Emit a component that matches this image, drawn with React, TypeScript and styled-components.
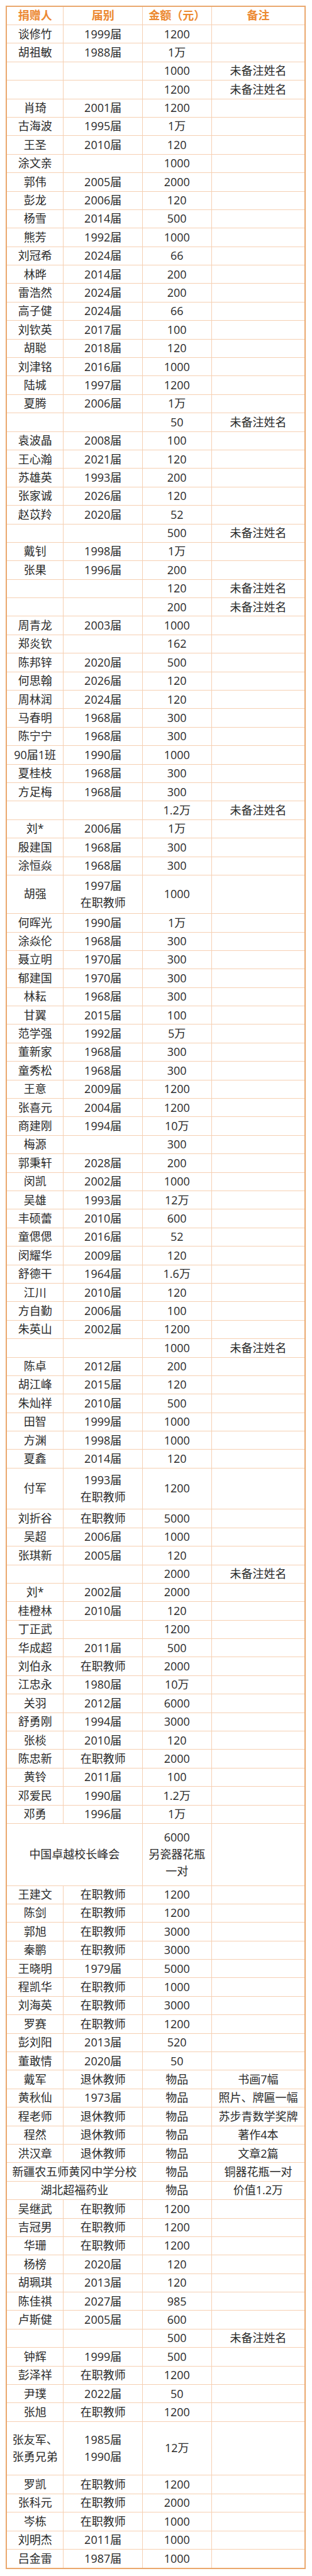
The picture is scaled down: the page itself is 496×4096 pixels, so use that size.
import React from 'react';
import styled, { createGlobalStyle } from 'styled-components';

// [捐赠人, 届别 (null = 捐赠人占两列), 金额, 备注, 行高]
type Entry = [string, string | null, string, string, number?];

const ROW_H = 29.4;

const donations: Entry[] = [
  ['谈修竹', '1999届', '1200', ''],
  ['胡祖敏', '1988届', '1万', ''],
  ['', '', '1000', '未备注姓名'],
  ['', '', '1200', '未备注姓名'],
  ['肖琦', '2001届', '1200', ''],
  ['古海波', '1995届', '1万', ''],
  ['王圣', '2010届', '120', ''],
  ['涂文亲', '', '1000', ''],
  ['郭伟', '2005届', '2000', ''],
  ['彭龙', '2006届', '120', ''],
  ['杨雪', '2014届', '500', ''],
  ['熊芳', '1992届', '1000', ''],
  ['刘冠希', '2024届', '66', ''],
  ['林晔', '2014届', '200', ''],
  ['雷浩然', '2024届', '200', ''],
  ['高子健', '2024届', '66', ''],
  ['刘钦英', '2017届', '100', ''],
  ['胡聪', '2018届', '120', ''],
  ['刘津铭', '2016届', '1000', ''],
  ['陆城', '1997届', '1200', ''],
  ['夏腾', '2006届', '1万', ''],
  ['', '', '50', '未备注姓名'],
  ['袁波晶', '2008届', '100', ''],
  ['王心瀚', '2021届', '120', ''],
  ['苏雄英', '1993届', '200', ''],
  ['张家诚', '2026届', '120', ''],
  ['赵苡羚', '2020届', '52', ''],
  ['', '', '500', '未备注姓名'],
  ['戴钊', '1998届', '1万', ''],
  ['张果', '1996届', '200', ''],
  ['', '', '120', '未备注姓名'],
  ['', '', '200', '未备注姓名'],
  ['周青龙', '2003届', '1000', ''],
  ['郑炎钦', '', '162', ''],
  ['陈邦锌', '2020届', '500', ''],
  ['何思翰', '2026届', '120', ''],
  ['周林润', '2024届', '120', ''],
  ['马春明', '1968届', '300', ''],
  ['陈宁宁', '1968届', '300', ''],
  ['90届1班', '1990届', '1000', ''],
  ['夏桂枝', '1968届', '300', ''],
  ['方足梅', '1968届', '300', ''],
  ['', '', '1.2万', '未备注姓名'],
  ['刘*', '2006届', '1万', ''],
  ['殷建国', '1968届', '300', ''],
  ['涂恒焱', '1968届', '300', ''],
  ['胡强', '1997届\n在职教师', '1000', '', 61.2],
  ['何晖光', '1990届', '1万', ''],
  ['涂焱伦', '1968届', '300', ''],
  ['聂立明', '1970届', '300', ''],
  ['郁建国', '1970届', '300', ''],
  ['林耘', '1968届', '300', ''],
  ['甘翼', '2015届', '100', ''],
  ['范学强', '1992届', '5万', ''],
  ['董新家', '1968届', '300', ''],
  ['童秀松', '1968届', '300', ''],
  ['王意', '2009届', '1200', ''],
  ['张喜元', '2004届', '1200', ''],
  ['商建刚', '1994届', '10万', ''],
  ['梅源', '', '300', ''],
  ['郭秉轩', '2028届', '200', ''],
  ['闵凯', '2002届', '1000', ''],
  ['吴雄', '1993届', '12万', ''],
  ['丰硕蕾', '2010届', '600', ''],
  ['童偲偲', '2016届', '52', ''],
  ['闵耀华', '2009届', '120', ''],
  ['舒德干', '1964届', '1.6万', ''],
  ['江川', '2010届', '120', ''],
  ['方自勤', '2006届', '100', ''],
  ['朱英山', '2002届', '1200', ''],
  ['', '', '1000', '未备注姓名'],
  ['陈卓', '2012届', '200', ''],
  ['胡江峰', '2015届', '120', ''],
  ['朱灿祥', '2010届', '500', ''],
  ['田智', '1999届', '1000', ''],
  ['方渊', '1998届', '1000', ''],
  ['夏鑫', '2014届', '120', ''],
  ['付军', '1993届\n在职教师', '1200', '', 65.5],
  ['刘折谷', '在职教师', '5000', ''],
  ['吴超', '2006届', '1000', ''],
  ['张琪新', '2005届', '120', ''],
  ['', '', '2000', '未备注姓名'],
  ['刘*', '2002届', '2000', ''],
  ['桂橙林', '2010届', '120', ''],
  ['丁正武', '', '1200', ''],
  ['华成超', '2011届', '500', ''],
  ['刘伯永', '在职教师', '2000', ''],
  ['江忠永', '1980届', '10万', ''],
  ['关羽', '2012届', '6000', ''],
  ['舒勇刚', '1994届', '3000', ''],
  ['张棪', '2010届', '120', ''],
  ['陈忠新', '在职教师', '2000', ''],
  ['黄铃', '2011届', '100', ''],
  ['邓爱民', '1990届', '1.2万', ''],
  ['邓勇', '1996届', '1万', ''],
  ['中国卓越校长峰会', null, '6000\n另瓷器花瓶\n一对', '', 98.5],
  ['王建文', '在职教师', '1200', ''],
  ['陈剑', '在职教师', '1200', ''],
  ['郭旭', '在职教师', '3000', ''],
  ['秦鹏', '在职教师', '3000', ''],
  ['王晓明', '1979届', '5000', ''],
  ['程凯华', '在职教师', '1000', ''],
  ['刘海英', '在职教师', '3000', ''],
  ['罗赛', '在职教师', '1200', ''],
  ['彭刘阳', '2013届', '520', ''],
  ['董敢情', '2020届', '50', ''],
  ['戴军', '退休教师', '物品', '书画7幅'],
  ['黄秋仙', '1973届', '物品', '照片、牌匾一幅'],
  ['程老师', '退休教师', '物品', '苏步青数学奖牌'],
  ['程然', '退休教师', '物品', '著作4本'],
  ['洪汉章', '退休教师', '物品', '文章2篇'],
  ['新疆农五师黄冈中学分校', null, '物品', '铜器花瓶一对'],
  ['湖北超福药业', null, '物品', '价值1.2万'],
  ['吴继武', '在职教师', '1200', ''],
  ['吉冠男', '在职教师', '1200', ''],
  ['华珊', '在职教师', '1200', ''],
  ['杨榜', '2020届', '120', ''],
  ['胡珮琪', '2013届', '120', ''],
  ['陈佳祺', '2027届', '985', ''],
  ['卢斯健', '2005届', '600', ''],
  ['', '', '500', '未备注姓名'],
  ['钟辉', '1999届', '500', ''],
  ['彭泽祥', '在职教师', '1200', ''],
  ['尹璞', '2022届', '50', ''],
  ['张旭', '在职教师', '1200', ''],
  ['张友军、\n张勇兄弟', '1985届\n1990届', '12万', '', 85.6],
  ['罗凯', '在职教师', '1200', ''],
  ['张科元', '在职教师', '2000', ''],
  ['岑栋', '在职教师', '1000', ''],
  ['刘明杰', '2011届', '1000', ''],
  ['吕金雷', '1987届', '1000', ''],
];

const GlobalStyle = createGlobalStyle`
  body {
    margin: 0;
    background: #ffffff;
    font-family: "Open Sans", "Noto Sans CJK SC", sans-serif;
  }
`;

const Page = styled.div`
  padding: 8.9px 0 12px 8.9px;
`;

const Sheet = styled.div`
  width: 477.5px;
  border: 2px solid #eaa96f;
  box-sizing: border-box;
  background: #fff;
`;

const Row = styled.div<{ $h: number }>`
  display: grid;
  grid-template-columns: 90.6px 125.4px 109.7px 1fr;
  height: ${props => props.$h}px;
  box-sizing: border-box;
  border-bottom: 1px solid #f6d0b3;

  &:last-child {
    border-bottom: none;
  }
`;

const Cell = styled.div<{ $span?: number }>`
  grid-column: span ${props => props.$span ?? 1};
  display: flex;
  align-items: center;
  justify-content: center;
  text-align: center;
  padding: 0 2px;
  border-right: 1px solid #f6d0b3;
  font-size: 18px;
  line-height: 27.3px;
  color: #2a2a2a;
  white-space: pre-line;
  overflow: hidden;

  &:last-child {
    border-right: none;
  }
`;

const HeadCell = styled(Cell)`
  color: #ec8932;
  font-weight: 700;
`;

export default function App() {
  return (
    <Page>
      <GlobalStyle />
      <Sheet>
        <Row $h={29.1}>
          <HeadCell>捐赠人</HeadCell>
          <HeadCell>届别</HeadCell>
          <HeadCell>金额（元）</HeadCell>
          <HeadCell>备注</HeadCell>
        </Row>
        {donations.map(([nome, grade, amount, note, h], index) => (
          <Row key={index} $h={h ?? ROW_H}>
            {grade === null ? (
              <Cell $span={2}>{nome}</Cell>
            ) : (
              <>
                <Cell>{nome}</Cell>
                <Cell>{grade}</Cell>
              </>
            )}
            <Cell>{amount}</Cell>
            <Cell>{note}</Cell>
          </Row>
        ))}
      </Sheet>
    </Page>
  );
}
